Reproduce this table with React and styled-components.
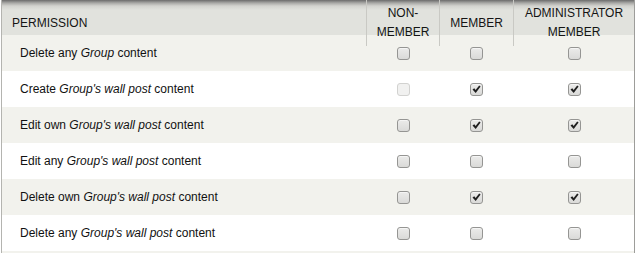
import React from 'react';
import styled, { createGlobalStyle } from 'styled-components';

const GlobalStyle = createGlobalStyle`
  html, body {
    margin: 0;
    padding: 0;
    background: #ffffff;
  }
  body {
    font-family: "Liberation Sans", Arial, sans-serif;
    font-size: 12px;
    color: #111111;
  }
`;

const COLS = '364px 73px 74px 1fr';

const Table = styled.div`
  margin-left: 1px;
  width: 632px;
  height: 253px;
  border-left: 1px solid #b4b4b0;
  border-right: 1px solid #9d9d9a;
  overflow: hidden;
`;

const HeadRow = styled.div`
  display: grid;
  grid-template-columns: ${COLS};
  height: 46px;
  border-bottom: 1px solid #bdbdb9;
  background: linear-gradient(to bottom, #6b6b6b 0px, #a9a9a6 3px, #d3d3cf 6px, #e1e2dd 10px, #e1e2dd 100%);
`;

const HeadCell = styled.div`
  display: flex;
  align-items: center;
  justify-content: ${p => (p.$first ? 'flex-start' : 'center')};
  text-align: ${p => (p.$first ? 'left' : 'center')};
  padding-left: ${p => (p.$first ? '10px' : '0')};
  border-left: ${p => (p.$first ? 'none' : '1px solid #c9c9c4')};
  line-height: 19px;
  text-transform: uppercase;
  color: #141414;
`;

// rows alternate light/white; the strip below the last row is the next light row
const Body = styled.div`
  margin-top: -12px;
  min-height: 260px;
  background: #f2f2ed;
`;

const Row = styled.div`
  display: grid;
  grid-template-columns: ${COLS};
  height: 36px;
  background: ${p => (p.$odd ? '#f2f2ed' : '#ffffff')};
`;

const Label = styled.div`
  display: flex;
  align-items: center;
  padding-left: 18px;
  white-space: pre;
  color: #111111;
`;

const Cell = styled.div`
  display: flex;
  align-items: center;
  justify-content: center;
  padding-left: 1px;
`;

const Box = styled.span`
  display: inline-flex;
  align-items: center;
  justify-content: center;
  box-sizing: border-box;
  width: 13px;
  height: 13px;
  border-radius: 3px;
  border: 1px solid ${p => (p.$disabled ? '#d2d2d0' : '#959593')};
  background: ${p =>
    p.$disabled
      ? '#f1f1f0'
      : 'linear-gradient(to bottom, #ebebea 0%, #dadad8 100%)'};
  box-shadow: ${p => (p.$disabled ? 'none' : 'inset 0 1px 0 rgba(255,255,255,0.5)')};

  svg {
    display: block;
  }
`;

function Check({ checked, disabled }) {
  return (
    <Box $disabled={disabled}>
      {checked && (
        <svg width="9" height="9" viewBox="0 0 9 9">
          <path d="M0.5 4.4 L2.3 3.2 L3.6 5.0 L7.2 0.5 L8.6 1.6 L3.7 8.0 Z" fill="#1f1f1f" />
        </svg>
      )}
    </Box>
  );
}

const rows = [
  { verb: 'Delete any ', type: 'Group', roles: [0, 0, 0] },
  { verb: 'Create ', type: "Group's wall post", roles: [-1, 1, 1] },
  { verb: 'Edit own ', type: "Group's wall post", roles: [0, 1, 1] },
  { verb: 'Edit any ', type: "Group's wall post", roles: [0, 0, 0] },
  { verb: 'Delete own ', type: "Group's wall post", roles: [0, 1, 1] },
  { verb: 'Delete any ', type: "Group's wall post", roles: [0, 0, 0] },
];

export default function App() {
  return (
    <>
      <GlobalStyle />
      <Table>
        <HeadRow>
          <HeadCell $first>Permission</HeadCell>
          <HeadCell>Non-<br />member</HeadCell>
          <HeadCell>Member</HeadCell>
          <HeadCell>Administrator<br />member</HeadCell>
        </HeadRow>
        <Body>
          {rows.map((r, i) => (
            <Row key={i} $odd={i % 2 === 0}>
              <Label>
                {r.verb}
                <em>{r.type}</em>
                {' content'}
              </Label>
              {r.roles.map((v, j) => (
                <Cell key={j}>
                  <Check checked={v === 1} disabled={v === -1} />
                </Cell>
              ))}
            </Row>
          ))}
        </Body>
      </Table>
    </>
  );
}
